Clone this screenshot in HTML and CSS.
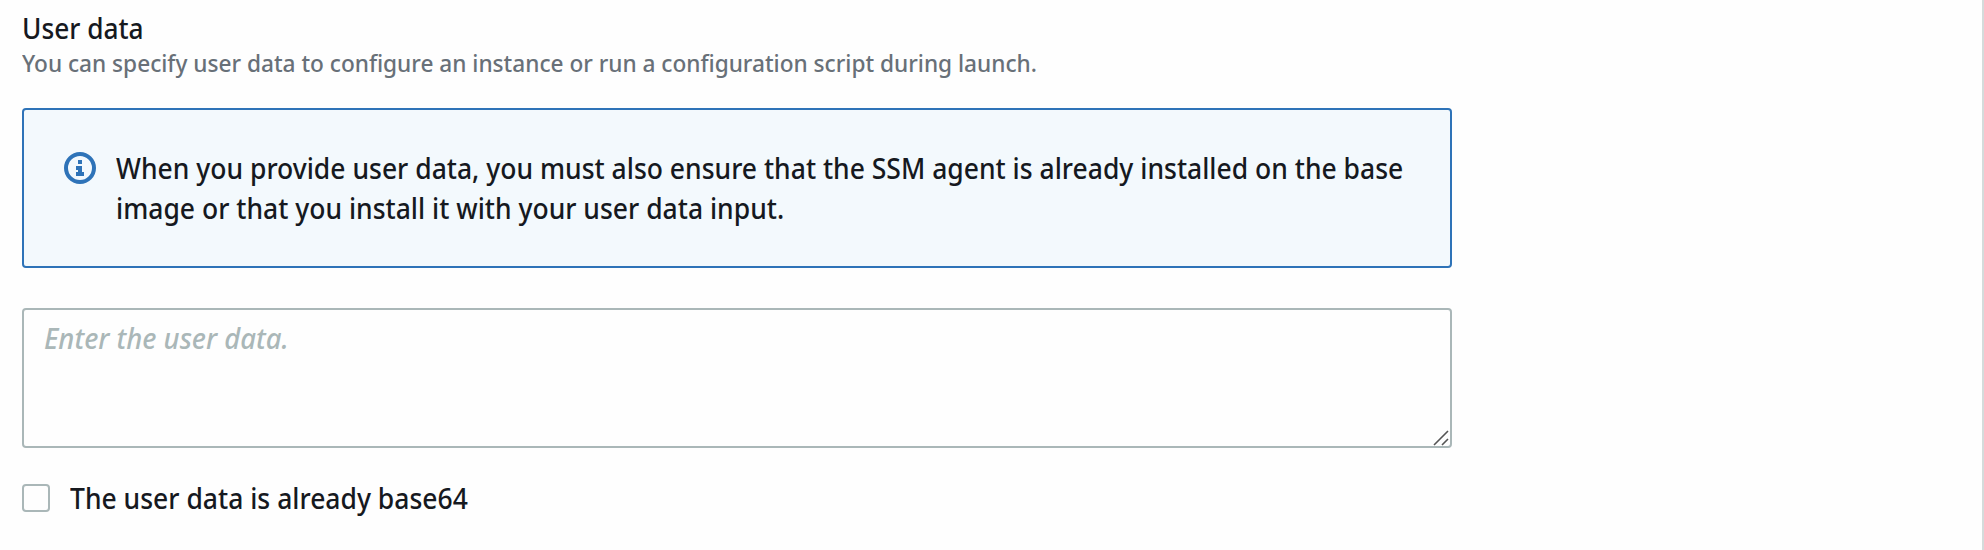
FILE: index.html
```html
<!DOCTYPE html>
<html lang="en">
<head>
<meta charset="utf-8">
<title>User data</title>
<link rel="stylesheet" href="styles.css">
</head>
<body>
<main class="panel">
  <div class="form">
    <h2 class="label"><span class="fit fit-label">User data</span></h2>
    <p class="description"><span class="fit fit-description">You can specify user data to configure an instance or run a configuration script during launch.</span></p>
    <div class="alert">
      <svg class="alert-icon" viewBox="0 0 32 32"><circle cx="16" cy="16" r="14" fill="none" stroke="currentColor" stroke-width="4"/><path fill="currentColor" d="M14 8h4v4h-4zM12 14h6v6h2v4h-8v-4h2v-2h-2z"/></svg>
      <p class="alert-text"><span class="fit">When you provide user data, you must also ensure that the SSM agent is already installed on the base</span><span class="fit">image or that you install it with your user data input.</span></p>
    </div>
    <div class="textarea">
      <span class="placeholder fit">Enter the user data.</span>
      <svg class="grip" viewBox="0 0 16 16"><path d="M1 15 15 1M9 15l6-6" fill="none" stroke="#555" stroke-width="1.6"/></svg>
    </div>
    <div class="option">
      <span class="checkbox"></span>
      <span class="option-text fit">The user data is already base64</span>
    </div>
  </div>
</main>
</body>
</html>
```
FILE: styles.css
```css
* { box-sizing: border-box; margin: 0; padding: 0; }
body { background: #fefefe; color: #16191f; font: 500 28px/40px "Noto Sans", sans-serif; }
.panel { height: 550px; padding: 8px 0 0 22px; border-right: 2px solid #d5dbdb; }
.form { width: 1430px; }
/* Slightly condensed text */
.fit { display: block; width: max-content; transform: scaleX(.9465); transform-origin: 0 50%; }
.fit-label { transform: scaleX(.938); }
.fit-description { transform: scaleX(.943); }
.label { font-size: 28px; font-weight: 500; line-height: 40px; }
.description { font-size: 24px; line-height: 30px; color: #687078; }
.alert { display: flex; height: 160px; margin-top: 30px; padding: 38px 40px; border: 2px solid #2e73b8; border-radius: 4px; background: #f3f9fd; }
.alert-icon { flex: none; width: 32px; height: 32px; margin: 4px 20px 0 0; color: #2e73b8; }
.alert-text { width: 0; }
.textarea { position: relative; height: 140px; margin-top: 40px; padding: 8px 20px; border: 2px solid #aab7b8; border-radius: 4px; background: #fefefe; }
.placeholder { color: #aab7b8; font-style: italic; transform: scaleX(.979); }
.grip { position: absolute; right: 1px; bottom: 0; width: 16px; height: 16px; }
.option { display: flex; align-items: center; gap: 20px; margin-top: 30px; }
.checkbox { width: 28px; height: 28px; border: 2px solid #aab7b8; border-radius: 4px; background: #fefefe; }
```
